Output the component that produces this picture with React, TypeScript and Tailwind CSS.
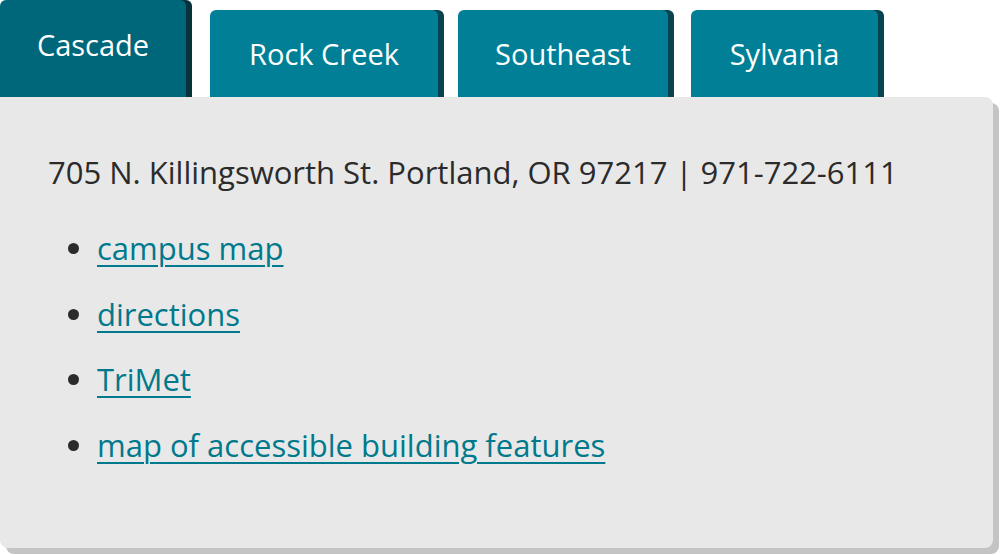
const tabs = [
    { name: 'Cascade', cls: 'w-[186px]' },
    { name: 'Rock Creek', cls: 'ml-[24px] w-[228px]' },
    { name: 'Southeast', cls: 'ml-[20px] w-[210px]' },
    { name: 'Sylvania', cls: 'ml-[23px] w-[187px]' },
];

const links = ['campus map', 'directions', 'TriMet', 'map of accessible building features'];

export default function App() {
    return (
        <div className="h-[555px] w-[1000px] overflow-hidden bg-white" style={{ fontFamily: '"Open Sans", "Noto Sans", sans-serif' }}>
            <div className="flex items-end">
                {tabs.map((t, i) =>
                    i === 0 ? (
                        <div
                            key={t.name}
                            className={`${t.cls} h-[97px] shrink-0 rounded-t-[6px] bg-[#00667a] pt-[26px] text-center text-[29px] leading-[38px] text-white shadow-[6px_0_0_#07323c]`}
                        >
                            {t.name}
                        </div>
                    ) : (
                        <div
                            key={t.name}
                            className={`${t.cls} h-[87px] shrink-0 rounded-t-[6px] bg-[#007f96] pt-[25px] text-center text-[29px] leading-[38px] text-white shadow-[6px_0_0_#0a4350]`}
                        >
                            {t.name}
                        </div>
                    ),
                )}
            </div>
            <div className="h-[451px] w-[993px] rounded-tr-[8px] rounded-b-[8px] bg-[#e8e8e8] pl-[48px] pt-[52px] shadow-[6px_6px_0_#c4c4c4]">
                <p className="text-[31px] leading-[46px] text-[#2b2b2b]">
                    705 N. Killingsworth St. Portland, OR 97217 | 971-722-6111
                </p>
                <ul className="mt-[30px] list-disc pl-[49px] text-[31px] leading-[46px] text-[#2b2b2b]">
                    {links.map((l) => (
                        <li key={l} className="mb-[19.5px]">
                            <a href="#" className="text-[#00798c] underline decoration-2 underline-offset-[5px]">
                                {l}
                            </a>
                        </li>
                    ))}
                </ul>
            </div>
        </div>
    );
}
